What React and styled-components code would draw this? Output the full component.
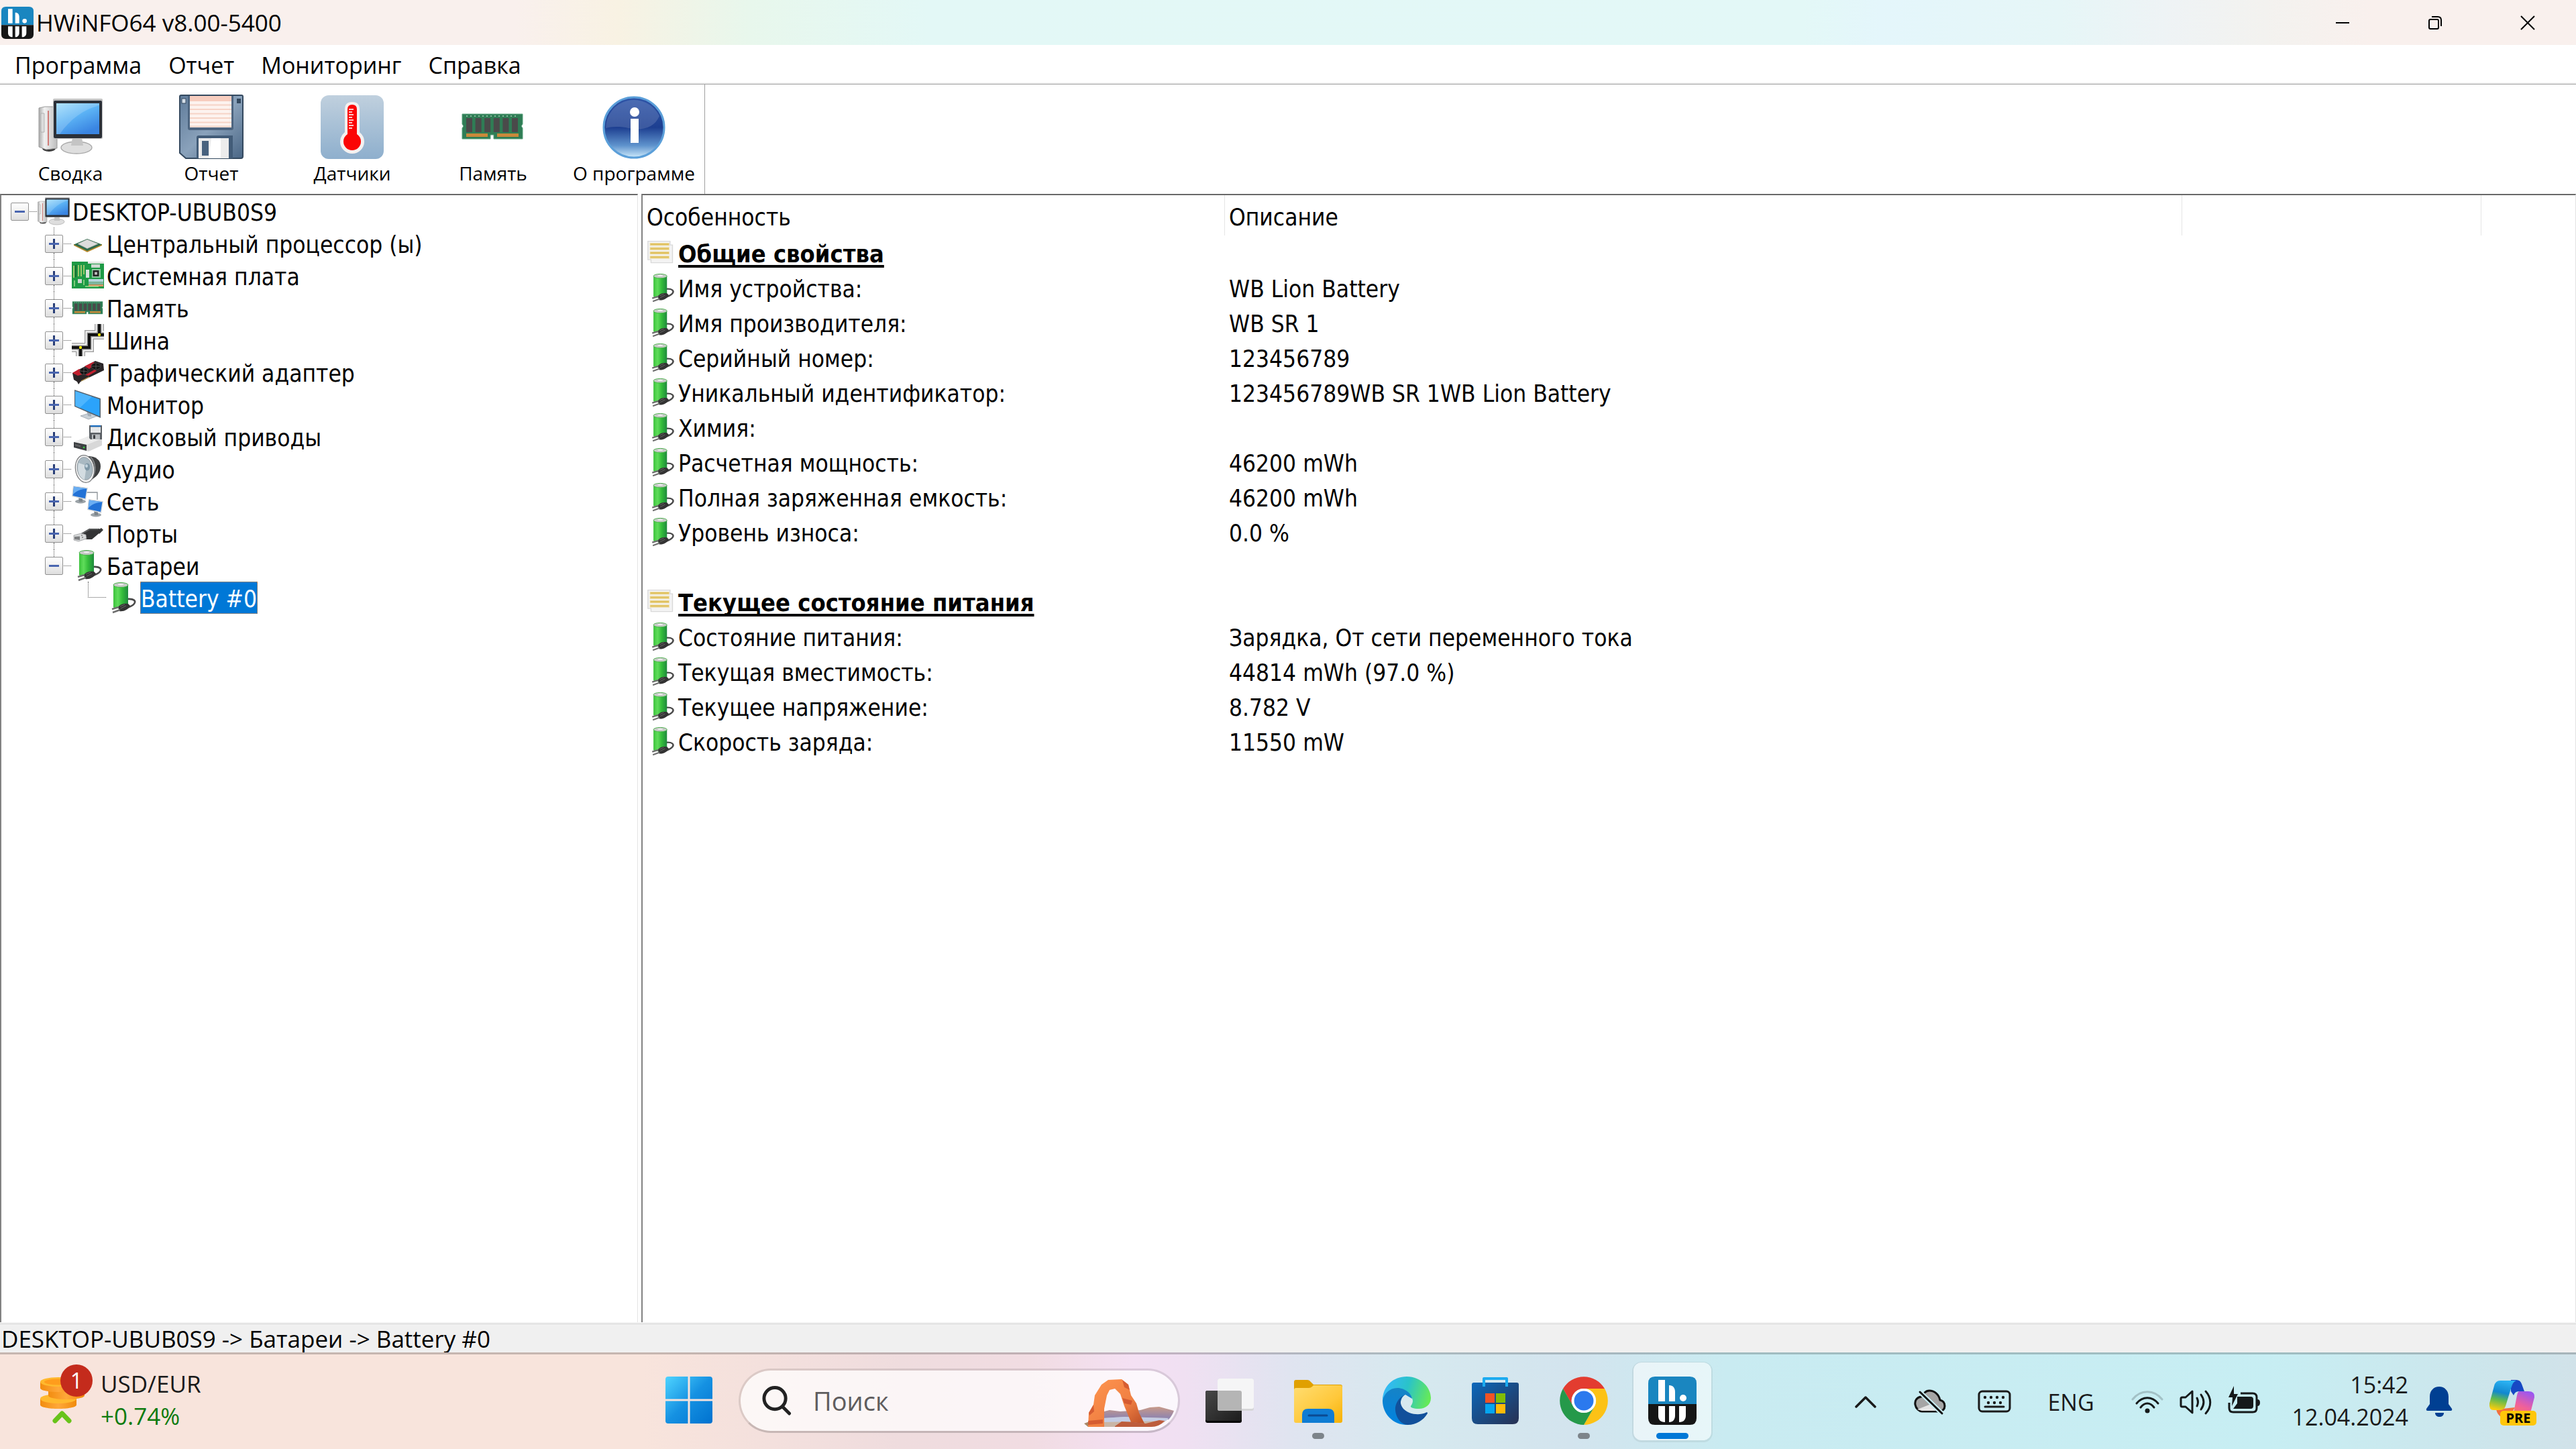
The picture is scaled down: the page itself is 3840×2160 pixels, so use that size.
import React, { useState } from 'react';
import styled, { createGlobalStyle, css } from 'styled-components';

const tahoma = '"DejaVu Sans Condensed", "DejaVu Sans", sans-serif';
const segoe = '"Open Sans", "Noto Sans", sans-serif';

const PcIcon = (props) => (
  <svg viewBox="0 0 48 48" {...props}>
    <defs>
      <linearGradient id="pcScreen" x1="0" y1="0" x2="0.6" y2="1">
        <stop offset="0" stopColor="#9fdcfa" />
        <stop offset="0.5" stopColor="#5cb3f5" />
        <stop offset="1" stopColor="#3a85e2" />
      </linearGradient>
      <linearGradient id="pcTower" x1="0" y1="0" x2="1" y2="0">
        <stop offset="0" stopColor="#a9a9a9" />
        <stop offset="0.3" stopColor="#f2f2f2" />
        <stop offset="1" stopColor="#bdbdbd" />
      </linearGradient>
    </defs>
    <ellipse cx="8" cy="40" rx="5" ry="2.5" fill="#3c3c3c" />
    <path d="M0.5 10 L5 9 L14 9 L14 40 L6 41 L0.5 39Z" fill="url(#pcTower)" stroke="#9a9a9a" strokeWidth="0.5" />
    <path d="M7.500 12V38" stroke="#c9504a" strokeWidth="0.7" />
    <path d="M2 14h2.500v14H2z" fill="#dcdcdc" stroke="#a8a8a8" strokeWidth="0.4" />
    <ellipse cx="28.500" cy="39.500" rx="11.500" ry="4.500" fill="#dedede" stroke="#aaa" strokeWidth="0.7" />
    <path d="M25.500 32h7l1 6h-9z" fill="#c4c4c4" />
    <rect x="11" y="3" width="37" height="30" rx="1" fill="#c2c2c2" />
    <rect x="11.500" y="4.500" width="36" height="28" rx="1" fill="#2b3038" />
    <rect x="13.500" y="6.500" width="32" height="23" fill="url(#pcScreen)" />
    <path d="M13.500 29.500V6.500H45.500V8C34 11 24 18 16 29.500Z" fill="#fff" opacity="0.18" />
  </svg>
);

const CpuIcon = () => (
  <svg viewBox="0 0 48 48">
    <path d="M3 27L23 37L45 27L45 25L3 25Z" fill="#b98a2e" />
    <path d="M3 25.500L23 35L45 25.500L23 17Z" fill="#2f6b4c" />
    <path d="M9 24.500L23 31.500L39 24.500L23 18Z" fill="#dcdcdc" stroke="#b5b5b5" strokeWidth="0.6" />
  </svg>
);

const BoardIcon = () => (
  <svg viewBox="0 0 48 48">
    <rect y="3" width="48" height="40" fill="#1d9a45" />
    <path d="M24 3h24v3H24z" fill="#dfe6df" />
    <path d="M3 9v18M10 8v17M14 8v17M18 8v14" stroke="#c8d67a" strokeWidth="1.500" />
    <path d="M6 8v18" stroke="#1b5c31" strokeWidth="1.500" />
    <rect x="21" y="15" width="5" height="12" fill="#d8e2dc" />
    <rect x="29" y="7" width="13" height="5" fill="#cfd8d2" />
    <rect x="30" y="14" width="13" height="13" fill="#8fc7a0" />
    <rect x="31.500" y="16" width="9" height="9" fill="#222" />
    <rect x="34" y="18.500" width="4" height="4" fill="#bbb" />
    <rect x="25" y="29" width="22" height="4" fill="#b5d5dd" />
    <rect x="25" y="33.500" width="22" height="3" fill="#8fb9ad" />
    <rect x="25" y="37" width="22" height="3" fill="#d69568" />
    <rect x="9" y="29" width="6" height="6" fill="#cdd5cf" />
    <path d="M4 31v9M18 30v8M20 40h20" stroke="#9fdc8c" strokeWidth="1.500" />
  </svg>
);

const RamIcon = (props) => (
  <svg viewBox="0 0 48 48" {...props}>
    <path d="M1 14.500H46V22l-1 1.500l1 1.500V33H24.500V30h-2.500V33H1V25l1-1.500L1 22Z" fill="#2f7d55" stroke="#58a27c" strokeWidth="0.5" />
    <path d="M4 16h39" stroke="#a5cdb5" strokeWidth="0.8" strokeDasharray="1 2" />
    <g fill="#4a4a4a">
      <rect x="4" y="17.500" width="4.500" height="10.500" />
      <rect x="10.800" y="17.500" width="4.500" height="10.500" />
      <rect x="17.600" y="17.500" width="4.500" height="10.500" />
      <rect x="24.400" y="17.500" width="4.500" height="10.500" />
      <rect x="31.200" y="17.500" width="4.500" height="10.500" />
      <rect x="38" y="17.500" width="4.500" height="10.500" />
    </g>
    <path d="M4 29h16v2.500H4zM27 29h16v2.500H27z" fill="#c9893a" />
  </svg>
);

const BusIcon = () => (
  <svg viewBox="0 0 48 48" fill="none">
    <g stroke="#a2a2a2" strokeWidth="14">
      <path d="M0 35H26V16H48M13 35V48M41 16V0" />
    </g>
    <g stroke="#fafafa" strokeWidth="11">
      <path d="M0 35H26V16H48M13 35V48M41 16V0" />
    </g>
    <g stroke="#8a8a8a" strokeWidth="7">
      <path d="M0 35H26V16H48M13 35V48M41 16V0" />
    </g>
    <g stroke="#111" strokeWidth="4">
      <path d="M0 35H26V16H48M13 35V48M41 16V0" />
    </g>
    <circle cx="13" cy="35" r="2.200" fill="#f2e600" />
    <circle cx="41" cy="16" r="2.200" fill="#f2e600" />
  </svg>
);

const GpuIcon = () => (
  <svg viewBox="0 0 48 48">
    <path d="M1 25L35 7L47 11L48 21L13 38L10 42L8 38L3 35Z" fill="#2a2527" />
    <path d="M1 25L11 19L20 26L9 29Z" fill="#c11f2e" />
    <path d="M19 15L32 8.500L36 11L26 19ZM20 28L34 20L37 22L25 29Z" fill="#c11f2e" />
    <ellipse cx="18" cy="22.500" rx="6" ry="5" fill="#111" stroke="#555" strokeWidth="0.7" />
    <ellipse cx="36" cy="15" rx="7" ry="5" fill="#151515" stroke="#555" strokeWidth="0.7" />
    <path d="M13 22l10 1M18 18v9M30 15l12 0M36 11v8" stroke="#6b6b6b" strokeWidth="0.7" />
    <path d="M14 37l12-6" stroke="#b89a50" strokeWidth="1.300" />
  </svg>
);

const MonitorIcon = () => (
  <svg viewBox="0 0 48 48">
    <path d="M13 41L29 36L38 41L25 46Z" fill="#c9d1d8" stroke="#8d98a3" strokeWidth="0.7" />
    <path d="M22 33L29 36V42L24 41Z" fill="#a4afb9" />
    <path d="M4 2L43 15V44L4 27Z" fill="#55616c" />
    <path d="M5.200 4L41.500 16.200V41.500L5.200 26Z" fill="#2ba3fb" />
    <path d="M5.200 4L30 12.300L12 29L5.200 26Z" fill="#5cbcff" opacity="0.7" />
  </svg>
);

const DiskIcon = () => (
  <svg viewBox="0 0 48 48">
    <path d="M3 32L26 23L45 27V37L25 46L3 40Z" fill="#d8d8d8" />
    <path d="M3 32L26 23L45 27L22 36Z" fill="#ececec" />
    <path d="M3 32L22 36V45L3 40Z" fill="#3c3f42" />
    <path d="M5 35.500L13 37.500M5 37L13 39" stroke="#777" strokeWidth="0.8" />
    <circle cx="18" cy="40" r="1.300" fill="#35d83b" />
    <path d="M26 7H45V28H28L26 26Z" fill="#5b6065" />
    <path d="M28 7H43V9.500H28Z" fill="#1e6fc0" />
    <path d="M28 9.500H43V18H28Z" fill="#e6e8e9" />
    <path d="M30 20.500H42V28H30Z" fill="#b9bdc0" />
    <path d="M32 21.500H35V27H32Z" fill="#3c3f42" />
  </svg>
);

const AudioIcon = () => (
  <svg viewBox="0 0 48 48">
    <path d="M24 5C36 5 43 11 43 20C43 30 36 37 26 42Z" fill="#3d3f40" />
    <path d="M28 6C36 14 37 28 30 38" fill="none" stroke="#8a8d8f" strokeWidth="1.500" />
    <ellipse cx="19.500" cy="24" rx="14" ry="20.500" fill="#f4f4f4" stroke="#77797b" strokeWidth="1.200" transform="rotate(-8 19 24)" />
    <ellipse cx="19.500" cy="23.500" rx="11.500" ry="17" fill="#a9b9c2" stroke="#8a9297" strokeWidth="0.8" transform="rotate(-8 19 23)" />
    <path d="M10 15L22 19L19 40C12 38 7 28 10 15Z" fill="#d3dce1" />
    <ellipse cx="23" cy="21" rx="4" ry="5.500" fill="#7e97a6" />
    <ellipse cx="22" cy="19.500" rx="2" ry="2.500" fill="#c4d5df" />
  </svg>
);

const NetScreen = ({ x, y }) => (
  <g transform={`translate(${x} ${y})`}>
    <ellipse cx="13" cy="23.500" rx="8" ry="3" fill="#9ca3a8" />
    <path d="M10 17L16 18V24H11Z" fill="#7d858b" />
    <path d="M2 0L24 3L21 21L0 16Z" fill="#d6dadd" />
    <path d="M3 1.500L22.500 4.200L20 19L1.500 15Z" fill="#2272d6" />
    <path d="M3 1.500L22.500 4.200C14 5 6 8 2 13Z" fill="#6aaef2" />
  </g>
);

const NetIcon = () => (
  <svg viewBox="0 0 48 48">
    <path d="M22 11H38V22" fill="none" stroke="#8b9196" strokeWidth="1.300" />
    <NetScreen x={0} y={1} />
    <NetScreen x={23} y={21} />
  </svg>
);

const UsbIcon = () => (
  <svg viewBox="0 0 48 48">
    <path d="M38 20L44 16L47 19L41 25Z" fill="#3a3a3a" />
    <path d="M14 24L26 17L41 17L43 22L30 33L18 33Z" fill="#333435" />
    <path d="M16 24L27 18L40 18" stroke="#707273" strokeWidth="1.200" fill="none" />
    <path d="M3 27L14 24L21 26L22 32L10 36L3 34Z" fill="#d7d9da" stroke="#8f9193" strokeWidth="0.7" />
    <path d="M4 29L12 28.500V34L4 33Z" fill="#7b7d7f" />
    <path d="M14 27h2M15 30h2" stroke="#555" strokeWidth="1.200" />
  </svg>
);

const BatteryIcon = () => (
  <svg viewBox="0 0 48 48">
    <defs>
      <linearGradient id="cell" x1="0" y1="0" x2="1" y2="0">
        <stop offset="0" stopColor="#3cc23c" />
        <stop offset="0.3" stopColor="#5fdd5a" />
        <stop offset="0.6" stopColor="#35bd3b" />
        <stop offset="1" stopColor="#1e8a3c" />
      </linearGradient>
    </defs>
    <path d="M31 26C42 25 45 29 42 33C39 37 34 38 29 40" fill="none" stroke="#4a4a4a" strokeWidth="2.600" />
    <path d="M11 5H33V38C33 41 11 41 11 38Z" fill="url(#cell)" />
    <ellipse cx="22" cy="5" rx="11" ry="3.500" fill="#c9ccc9" stroke="#47b148" strokeWidth="1" />
    <ellipse cx="22" cy="4.300" rx="5" ry="1.800" fill="#efefef" stroke="#999" strokeWidth="0.5" />
    <path d="M18 38C21 33 28 32 33 33L36 36C33 42 26 45 20 44Z" fill="#333" />
    <path d="M21 37L28 34M22 40L30 36" stroke="#777" strokeWidth="0.8" />
    <path d="M9 41L19 38M10 46L21 42" stroke="#6e6e6e" strokeWidth="2.400" />
  </svg>
);

const SectionIcon = () => (
  <svg viewBox="0 0 48 48">
    <path d="M2 5H38V11H42V40H7V35H2Z" fill="#f3f3f3" stroke="#d9d9d9" strokeWidth="1.500" />
    <path d="M5 10H37M5 17H37M5 24H37M5 31H37" stroke="#efdfa8" strokeWidth="5" />
    <path d="M6 10H36M6 17H36M6 24H36M6 31H36" stroke="#dfc05c" strokeWidth="2.500" />
  </svg>
);

const FloppyIcon = () => (
  <svg viewBox="0 0 96 96">
    <defs>
      <linearGradient id="floppy" x1="0" y1="0" x2="1" y2="1">
        <stop offset="0" stopColor="#5f7b9a" />
        <stop offset="0.5" stopColor="#8aa2bb" />
        <stop offset="1" stopColor="#4a6685" />
      </linearGradient>
    </defs>
    <path d="M1 3Q1 1 3 1H93Q95 1 95 3V92Q95 95 92 95H10L1 87Z" fill="url(#floppy)" stroke="#34495f" strokeWidth="2" />
    <rect x="4" y="6" width="6" height="7" fill="#d5dfe9" stroke="#34495f" />
    <rect x="86" y="6" width="6" height="7" fill="#34495f" />
    <path d="M13 2H81V50Q81 53 78 53H16Q13 53 13 50Z" fill="#4d6580" />
    <path d="M16 2H78V49H16Z" fill="#fdf3ef" />
    <path d="M16 2H78V10H16Z" fill="#f7cdbf" />
    <path d="M16 15.500H78M16 22H78M16 28.500H78M16 35H78M16 41.500H78M16 47.500H78" stroke="#f6d3c6" strokeWidth="2" />
    <path d="M26 95V64Q26 61 29 61H80V95Z" fill="#425c78" />
    <rect x="29" y="65" width="45" height="30" fill="#ececec" />
    <path d="M48 65h14v30H44z" fill="#fff" />
    <rect x="34" y="69" width="10" height="22" fill="#48627e" />
  </svg>
);

const ThermoIcon = () => (
  <svg viewBox="0 0 96 96">
    <defs>
      <linearGradient id="thermo" x1="0" y1="0" x2="0" y2="1">
        <stop offset="0" stopColor="#c0d0de" />
        <stop offset="1" stopColor="#8eafcd" />
      </linearGradient>
    </defs>
    <rect x="1" y="1" width="94" height="95" rx="12" fill="url(#thermo)" />
    <path d="M37 22Q37 11 48 11Q59 11 59 22V56Q66 62 66 70A18 18 0 0 1 30 70Q30 62 37 56Z" fill="#f4f1f0" />
    <path d="M41 22Q41 15 48 15Q55 15 55 22V59Q61 63 61 70A13 13 0 0 1 35 70Q35 63 41 59Z" fill="#fb0505" />
    <path d="M43 22h7M43 26h5M43 30h7M43 34h5M43 38h7M43 42h5M43 46h7M43 50h5" stroke="#ffc4c4" strokeWidth="2" />
  </svg>
);

const InfoIcon = () => (
  <svg viewBox="0 0 96 96">
    <defs>
      <linearGradient id="info" x1="0" y1="0" x2="0" y2="1">
        <stop offset="0" stopColor="#2f55a8" />
        <stop offset="0.5" stopColor="#1d3f91" />
        <stop offset="0.8" stopColor="#5f93cd" />
        <stop offset="1" stopColor="#cdeafb" />
      </linearGradient>
    </defs>
    <circle cx="48" cy="49" r="45" fill="url(#info)" stroke="#5b9fd9" strokeWidth="3" />
    <path d="M6 50A42 42 0 0 1 86 32C78 50 60 54 40 50C26 47 14 48 6 50Z" fill="#fff" opacity="0.14" />
    <circle cx="49" cy="26" r="7" fill="#fff" />
    <path d="M43 36h12v36H43z" fill="#fff" />
  </svg>
);

const AppLogo = () => (
  <svg viewBox="0 0 72 72">
    <path d="M0 41V10Q0 0 10 0H62Q72 0 72 10V41Z" fill="#1a86c0" />
    <path d="M0 41H72V62Q72 72 62 72H10Q0 72 0 62Z" fill="#161616" />
    <g fill="#fff">
      <path d="M15 5H25V37H15ZM31 13C37 13 40 17 40 23V37H31Z" />
      <circle cx="52" cy="32" r="5" />
      <path d="M15 44H25V68C18 68 15 64 15 59ZM31 44H40V58C40 64 37 68 31 68ZM46 44H56V58C56 64 53 68 46 68Z" />
    </g>
  </svg>
);

const CoinsIcon = () => (
  <svg viewBox="0 0 72 72">
    <defs>
      <linearGradient id="coin" x1="0" y1="0" x2="1" y2="0">
        <stop offset="0" stopColor="#f28c0f" />
        <stop offset="0.5" stopColor="#ffa83a" />
        <stop offset="1" stopColor="#f08a0a" />
      </linearGradient>
    </defs>
    <path d="M0 32V41C0 49 54 49 54 41V32Z" fill="url(#coin)" />
    <ellipse cx="27" cy="32" rx="27" ry="7" fill="#ffb92e" />
    <path d="M12 20V27C12 35 66 35 66 27V20Z" fill="url(#coin)" />
    <path d="M0 7V16C0 24 54 24 54 16V7Z" fill="url(#coin)" />
    <ellipse cx="27" cy="7" rx="27" ry="7" fill="#ffb92e" />
    <ellipse cx="27" cy="7" rx="21" ry="4.500" fill="#ff9d1c" />
    <path d="M22 65L32.500 54L43 65" fill="none" stroke="#68c31a" strokeWidth="7" strokeLinecap="round" strokeLinejoin="round" />
  </svg>
);

const StartIcon = () => (
  <svg viewBox="0 0 69 69">
    <defs>
      <linearGradient id="start" gradientUnits="userSpaceOnUse" x1="0" y1="0" x2="69" y2="69">
        <stop offset="0" stopColor="#4fd4ff" />
        <stop offset="0.5" stopColor="#1591e2" />
        <stop offset="1" stopColor="#0072cf" />
      </linearGradient>
    </defs>
    <path d="M4 0H33V33H0V4Q0 0 4 0ZM36 0H65Q69 0 69 4V33H36ZM0 36H33V69H4Q0 69 0 65ZM36 36H69V65Q69 69 65 69H36Z" fill="url(#start)" />
  </svg>
);

const SearchIcon = () => (
  <svg viewBox="0 0 44 45" fill="none" stroke="#222" strokeWidth="5" strokeLinecap="round">
    <circle cx="19" cy="19" r="16.500" />
    <path d="M31 32L41 42" />
  </svg>
);

const ArchIcon = () => (
  <svg viewBox="0 0 134 72">
    <defs>
      <linearGradient id="arch" x1="0" y1="0" x2="1" y2="1">
        <stop offset="0" stopColor="#ff9650" />
        <stop offset="0.6" stopColor="#f07f42" />
        <stop offset="1" stopColor="#b54a26" />
      </linearGradient>
      <linearGradient id="hills" x1="0" y1="0" x2="0" y2="1">
        <stop offset="0" stopColor="#c99a88" />
        <stop offset="1" stopColor="#8781b4" />
      </linearGradient>
    </defs>
    <path d="M26 49L38 46L54 48L84 46L98 42L112 41L134 47Q131 55 126 60H26Z" fill="url(#hills)" />
    <path d="M28 58L60 56L126 58Q114 71 98 71H26Z" fill="#c9b5a6" />
    <path d="M28 58L60 56L126 58L122 62L28 64Z" fill="#c4cce4" />
    <path d="M0 66L8 63L30 71H6Z" fill="#a78768" />
    <path d="M6 71L7 50L14 38L16 24L26 8L36 1L56 0L66 8L70 24L78 36L82 50L90 66L70 64L60 40L54 22L46 14L38 16L34 24L30 44L30 71Z" fill="url(#arch)" />
    <path d="M57 1L66 8L68 16L60 12ZM7 50L14 38L15 48L8 54ZM6 62L28 60V66L6 68ZM57 28L72 32L70 38L60 36Z" fill="#c94b2b" opacity="0.7" />
    <path d="M46 70L56 63L74 64L92 66L112 61L120 62Q112 71 100 71H46Z" fill="#bd5c3c" />
  </svg>
);

const TaskViewIcon = () => (
  <svg viewBox="0 0 72 72">
    <defs>
      <linearGradient id="tvDark" x1="0" y1="0" x2="1" y2="1">
        <stop offset="0" stopColor="#484848" />
        <stop offset="1" stopColor="#1c1c1c" />
      </linearGradient>
    </defs>
    <rect y="21" width="54" height="48" rx="3" fill="#000" />
    <rect y="21" width="54" height="45" rx="3" fill="url(#tvDark)" />
    <rect x="18" y="3" width="54" height="48" rx="3" fill="#d6d6d8" />
    <rect x="18" y="3" width="54" height="45" rx="3" fill="#f5f5f6" />
    <path d="M18 21H51Q54 21 54 24V51H21Q18 51 18 48Z" fill="#b5b5b5" />
  </svg>
);

const FolderIcon = () => (
  <svg viewBox="0 0 72 72">
    <defs>
      <linearGradient id="folder" x1="0" y1="0" x2="1" y2="1">
        <stop offset="0" stopColor="#ffdd72" />
        <stop offset="0.6" stopColor="#ffc83a" />
        <stop offset="1" stopColor="#f6b106" />
      </linearGradient>
    </defs>
    <path d="M0 8Q0 5 3 5H20Q23 5 25 8L29 12H69Q72 12 72 15V30H0Z" fill="#e0a000" />
    <path d="M0 20Q0 17 3 17H22Q25 17 27 15L29 13H69Q72 13 72 16V66Q72 69 69 69H3Q0 69 0 66Z" fill="url(#folder)" />
    <path d="M12 69V57Q12 48 21 48H51Q60 48 60 57V69Z" fill="#0f7cd3" />
    <path d="M22 58H49" stroke="#0b4a91" strokeWidth="3" strokeLinecap="round" />
  </svg>
);

const EdgeIcon = () => (
  <svg viewBox="0 0 72 72">
    <defs>
      <linearGradient id="edgeTop" x1="0" y1="0.3" x2="1" y2="0.5">
        <stop offset="0" stopColor="#35b8fb" />
        <stop offset="0.5" stopColor="#2ac3c9" />
        <stop offset="1" stopColor="#66ea58" />
      </linearGradient>
      <linearGradient id="edgeLeft" x1="0.5" y1="0" x2="0.3" y2="1">
        <stop offset="0" stopColor="#1683c6" />
        <stop offset="1" stopColor="#0082e0" />
      </linearGradient>
    </defs>
    <path d="M0 36C0 24 10 16 22 16C34 16 44 24 44 33L34 27C28 30 26 38 27 44C30 62 36 72 36 72C16 72 0 56 0 36Z" fill="url(#edgeLeft)" />
    <path d="M34 27C24 30 18 42 19 50C20 62 28 72 38 72C50 72 61 65 67 55C67 53 66 53 65 53.500C58 57 48 57 40 54C30 50 26 42 27 36C28 31 30 29 34 27Z" fill="#11509b" />
    <path d="M0 36C0 14 16 0 36 0C58 0 72 17 72 32C72 42 64 48 54 48C46 48 41 46 42 44C44 41 45 39 45 36C44 26 34 17 22 17C10 17 2 26 0 36Z" fill="url(#edgeTop)" />
  </svg>
);

const StoreIcon = () => (
  <svg viewBox="0 0 72 72">
    <defs>
      <linearGradient id="store" x1="0" y1="0" x2="1" y2="1">
        <stop offset="0" stopColor="#0c68bb" />
        <stop offset="1" stopColor="#283152" />
      </linearGradient>
    </defs>
    <path d="M1 12Q1 9 4 9H68Q71 9 71 12V62Q71 71 62 71H10Q1 71 1 62Z" fill="url(#store)" />
    <path d="M19 15V3H53V15" fill="none" stroke="#1cabf0" strokeWidth="4" strokeLinejoin="round" />
    <rect x="21" y="25" width="14" height="14" fill="#f35325" />
    <rect x="37" y="25" width="14" height="14" fill="#81bc06" />
    <rect x="21" y="41" width="14" height="14" fill="#05a6f0" />
    <rect x="37" y="41" width="14" height="14" fill="#ffba08" />
  </svg>
);

const ChromeIcon = () => (
  <svg viewBox="0 0 72 72">
    <path d="M5 18A36 36 0 0 1 67 18L36 18A18 18 0 0 0 20 45Z" fill="#e33c30" />
    <path d="M67 18A36 36 0 0 1 36 72L51.600 45A18 18 0 0 0 36 18Z" fill="#fcc216" />
    <path d="M36 72A36 36 0 0 1 5 18L20.400 45A18 18 0 0 0 51.600 45Z" fill="#25994a" />
    <circle cx="36" cy="36" r="18" fill="#fff" />
    <circle cx="36" cy="36" r="14.500" fill="#2b79ee" />
  </svg>
);

const ChevronIcon = () => (
  <svg viewBox="0 0 48 48" fill="none" stroke="#1a1a1a" strokeWidth="3.500" strokeLinecap="round" strokeLinejoin="round">
    <path d="M10 31L24 17L38 31" />
  </svg>
);

const CloudOffIcon = () => (
  <svg viewBox="0 0 48 48" fill="none" stroke="#111" strokeWidth="3" strokeLinecap="round">
    <path d="M11 16C4 17 1 22 2 28C3 34 8 38 12 38H38C43 38 46 34 46 30C46 25 43 22 39 21C37 12 30 7 23 7C20 7 18 8 16 10" fill="#a5a5a5" />
    <path d="M5 35L28 26L36 37H12Z" fill="#e4e4e4" stroke="none" />
    <path d="M12 12L42 41" stroke="#c9edf2" strokeWidth="7" />
    <path d="M9 9L42 41" />
  </svg>
);

const KeyboardIcon = () => (
  <svg viewBox="0 0 50 48" fill="none" stroke="#1a1a1a" strokeWidth="3" strokeLinecap="round">
    <rect x="2" y="8" width="46" height="30" rx="5" />
    <path d="M11 31H39" />
    <g fill="#1a1a1a" stroke="none">
      <circle cx="11" cy="17" r="2.200" />
      <circle cx="20" cy="17" r="2.200" />
      <circle cx="29" cy="17" r="2.200" />
      <circle cx="38" cy="17" r="2.200" />
      <circle cx="16" cy="25" r="2.200" />
      <circle cx="25" cy="25" r="2.200" />
      <circle cx="34" cy="25" r="2.200" />
    </g>
  </svg>
);

const WifiIcon = () => (
  <svg viewBox="0 0 48 48" fill="none" stroke="#15191a" strokeWidth="3" strokeLinecap="round">
    <path d="M2 20C14 5 34 5 46 20" stroke="#a3c1c6" />
    <path d="M8 26C17 15 31 15 40 26" />
    <path d="M14 32C20 24 28 24 34 32" />
    <circle cx="24" cy="37" r="3.500" fill="#15191a" stroke="none" />
  </svg>
);

const SpeakerIcon = () => (
  <svg viewBox="0 0 48 48" fill="none" stroke="#15191a" strokeWidth="3" strokeLinecap="round" strokeLinejoin="round">
    <path d="M2 19V29Q2 31 4 31H9L19 40V8L9 17H4Q2 17 2 19Z" />
    <path d="M26 18C28 22 28 26 26 30M32 13C37 20 37 28 32 35M39 8C48 18 48 31 39 41" />
  </svg>
);

const PowerIcon = () => (
  <svg viewBox="0 0 48 48">
    <path d="M19 11H37Q43 11 43 17V33Q43 39 37 39H8Q2 39 2 33V25" fill="none" stroke="#15191a" strokeWidth="3" />
    <path d="M14 16H34Q38 16 38 20V30Q38 34 34 34H8L14 26Z" fill="#15191a" />
    <path d="M44 20Q48 20 48 25Q48 30 44 30Z" fill="#15191a" />
    <path d="M9 0L1 17H7L6 30L15 12H9Z" fill="#15191a" />
  </svg>
);

const BellIcon = () => (
  <svg viewBox="0 0 48 48" fill="#003f92">
    <path d="M10 16C10 7 16 1 24 1C32 1 38 7 38 16V27L43 34Q44 37 41 37H7Q4 37 5 34L10 27Z" />
    <path d="M18 40H31C31 44 28 46 24.500 46C21 46 18 44 18 40Z" />
  </svg>
);

const CopilotIcon = () => (
  <svg viewBox="0 0 72 72">
    <defs>
      <linearGradient id="coLeft" x1="0.5" y1="0" x2="0.3" y2="1">
        <stop offset="0" stopColor="#2bb2f2" />
        <stop offset="0.4" stopColor="#1288cf" />
        <stop offset="0.65" stopColor="#5fb94f" />
        <stop offset="1" stopColor="#fccd0c" />
      </linearGradient>
      <linearGradient id="coRight" x1="0.7" y1="0" x2="0.3" y2="1">
        <stop offset="0" stopColor="#9b57f0" />
        <stop offset="0.5" stopColor="#f0609b" />
        <stop offset="1" stopColor="#ff8a3d" />
      </linearGradient>
    </defs>
    <path d="M34 3H42Q48 3 50 9L54 20H46Q40 20 38 26L34 20Z" fill="#1749c4" />
    <path d="M12 47L40 44L34 54Q31 58 26 58H20Q14 56 12 47Z" fill="#f3703f" />
    <path d="M18 4H42Q37 5 34 16L26 42Q24 48 17 48H8Q1 48 2 38L9 12Q11 4 18 4Z" fill="url(#coLeft)" />
    <path d="M46 20H60Q70 20 69 29L62 56Q60 63 53 63H30Q36 60 38 52L43 26Q44 21 46 20Z" fill="url(#coRight)" />
  </svg>
);

const tree = [
  { label: 'Центральный процессор (ы)', icon: <CpuIcon /> },
  { label: 'Системная плата', icon: <BoardIcon /> },
  { label: 'Память', icon: <RamIcon /> },
  { label: 'Шина', icon: <BusIcon /> },
  { label: 'Графический адаптер', icon: <GpuIcon /> },
  { label: 'Монитор', icon: <MonitorIcon /> },
  { label: 'Дисковый приводы', icon: <DiskIcon /> },
  { label: 'Аудио', icon: <AudioIcon /> },
  { label: 'Сеть', icon: <NetIcon /> },
  { label: 'Порты', icon: <UsbIcon /> },
  { label: 'Батареи', icon: <BatteryIcon />, children: ['Battery #0'] },
];

const details = [
  { section: 'Общие свойства' },
  { name: 'Имя устройства:', value: 'WB Lion Battery' },
  { name: 'Имя производителя:', value: 'WB SR 1' },
  { name: 'Серийный номер:', value: '123456789' },
  { name: 'Уникальный идентификатор:', value: '123456789WB SR 1WB Lion Battery' },
  { name: 'Химия:', value: '' },
  { name: 'Расчетная мощность:', value: '46200 mWh' },
  { name: 'Полная заряженная емкость:', value: '46200 mWh' },
  { name: 'Уровень износа:', value: '0.0 %' },
  {},
  { section: 'Текущее состояние питания' },
  { name: 'Состояние питания:', value: 'Зарядка, От сети переменного тока' },
  { name: 'Текущая вместимость:', value: '44814 mWh (97.0 %)' },
  { name: 'Текущее напряжение:', value: '8.782 V' },
  { name: 'Скорость заряда:', value: '11550 mW' },
];

const tools = [
  { label: 'Сводка', icon: <PcIcon /> },
  { label: 'Отчет', icon: <FloppyIcon /> },
  { label: 'Датчики', icon: <ThermoIcon /> },
  { label: 'Память', icon: <RamIcon /> },
  { label: 'О программе', icon: <InfoIcon /> },
];

const apps = [
  { name: 'Task view', icon: <TaskViewIcon /> },
  { name: 'Explorer', icon: <FolderIcon />, running: true },
  { name: 'Edge', icon: <EdgeIcon /> },
  { name: 'Store', icon: <StoreIcon /> },
  { name: 'Chrome', icon: <ChromeIcon />, running: true },
  { name: 'HWiNFO64', icon: <AppLogo />, active: true },
];

const App = () => {
  const [query, setQuery] = useState('');
  const [rootOpen, setRootOpen] = useState(true);
  const [batteriesOpen, setBatteriesOpen] = useState(true);

  return (
    <Desktop>
      <GlobalStyle />
      <TitleBar>
        <Icon $size={48}><AppLogo /></Icon>
        <Title>HWiNFO64 v8.00-5400</Title>
        <WindowButton aria-label="Minimize">
          <svg viewBox="0 0 20 20"><path d="M0 10H20" /></svg>
        </WindowButton>
        <WindowButton aria-label="Restore">
          <svg viewBox="0 0 20 20"><rect x="1" y="5" width="14" height="14" rx="2" /><path d="M5 1H14Q19 1 19 6V15" /></svg>
        </WindowButton>
        <WindowButton aria-label="Close">
          <svg viewBox="0 0 20 20"><path d="M0 0L20 20M20 0L0 20" /></svg>
        </WindowButton>
      </TitleBar>

      <MenuBar>
        {['Программа', 'Отчет', 'Мониторинг', 'Справка'].map((item) => (
          <MenuItem key={item}>{item}</MenuItem>
        ))}
      </MenuBar>

      <Toolbar>
        {tools.map((tool) => (
          <ToolButton key={tool.label}>
            <Icon $size={96}>{tool.icon}</Icon>
            {tool.label}
          </ToolButton>
        ))}
      </Toolbar>

      <Main>
        <TreePane>
          <TreeRow>
            <Branch>
              <Expander open={rootOpen} onClick={() => setRootOpen(!rootOpen)} />
            </Branch>
            <Stub />
            <Icon $size={48}><PcIcon /></Icon>
            <TreeLabel>DESKTOP-UBUB0S9</TreeLabel>
          </TreeRow>
          {rootOpen && (
            <TreeList>
              {tree.map((node) => (
                <li key={node.label}>
                  <TreeRow>
                    <Branch>
                      <Dots />
                      <Expander
                        open={Boolean(node.children) && batteriesOpen}
                        onClick={() => node.children && setBatteriesOpen(!batteriesOpen)}
                      />
                      <Dots $hidden={Boolean(node.children)} />
                    </Branch>
                    <Stub />
                    <Icon $size={48}>{node.icon}</Icon>
                    <TreeLabel>{node.label}</TreeLabel>
                  </TreeRow>
                  {node.children && batteriesOpen && (
                    <TreeList>
                      {node.children.map((child) => (
                        <li key={child}>
                          <TreeRow>
                            <Elbow />
                            <Icon $size={48}><BatteryIcon /></Icon>
                            <TreeLabel $selected>{child}</TreeLabel>
                          </TreeRow>
                        </li>
                      ))}
                    </TreeList>
                  )}
                </li>
              ))}
            </TreeList>
          )}
        </TreePane>

        <DetailsPane>
          <DetailsTable>
            <colgroup>
              <col className="name" />
              <col className="value" />
              <col className="extra" />
              <col />
            </colgroup>
            <thead>
              <tr>
                <HeadCell>Особенность</HeadCell>
                <HeadCell>Описание</HeadCell>
                <HeadCell />
                <HeadCell />
              </tr>
            </thead>
            <tbody>
              {details.map((row, i) => (
                <tr key={i}>
                  <Cell>
                    {row.section && (
                      <NameWrap>
                        <Icon $size={44}><SectionIcon /></Icon>
                        <Section>{row.section}</Section>
                      </NameWrap>
                    )}
                    {row.name && (
                      <NameWrap>
                        <Icon $size={44}><BatteryIcon /></Icon>
                        <CellText>{row.name}</CellText>
                      </NameWrap>
                    )}
                  </Cell>
                  <Cell>{row.value && <CellText>{row.value}</CellText>}</Cell>
                  <Cell />
                  <Cell />
                </tr>
              ))}
            </tbody>
          </DetailsTable>
        </DetailsPane>
      </Main>

      <StatusBar>DESKTOP-UBUB0S9 -&gt; Батареи -&gt; Battery #0</StatusBar>

      <Taskbar>
        <Widget>
          <CoinsWrap>
            <Icon $size={72}><CoinsIcon /></Icon>
            <Badge>1</Badge>
          </CoinsWrap>
          <WidgetText>
            <span>USD/EUR</span>
            <Gain>+0.74%</Gain>
          </WidgetText>
        </Widget>

        <TaskGroup>
          <TaskButton aria-label="Start">
            <Icon $size={70}><StartIcon /></Icon>
          </TaskButton>
          <SearchBox>
            <Icon $size={44}><SearchIcon /></Icon>
            <SearchInput
              type="text"
              aria-label="Поиск"
              placeholder="Поиск"
              value={query}
              onChange={(e) => setQuery(e.target.value)}
            />
            <ArchWrap><ArchIcon /></ArchWrap>
          </SearchBox>
          {apps.map((app) => (
            <TaskButton key={app.name} aria-label={app.name} $active={app.active}>
              <Icon $size={72}>{app.icon}</Icon>
              {(app.running || app.active) && <Indicator $active={app.active} />}
            </TaskButton>
          ))}
        </TaskGroup>

        <Tray>
          <TrayButton aria-label="Hidden icons"><Icon $size={48}><ChevronIcon /></Icon></TrayButton>
          <TrayButton aria-label="OneDrive"><Icon $size={48}><CloudOffIcon /></Icon></TrayButton>
          <TrayButton aria-label="Touch keyboard"><Icon $size={50}><KeyboardIcon /></Icon></TrayButton>
          <LanguageButton>ENG</LanguageButton>
          <QuickSettings aria-label="Quick settings">
            <Icon $size={48}><WifiIcon /></Icon>
            <Icon $size={48}><SpeakerIcon /></Icon>
            <Icon $size={48}><PowerIcon /></Icon>
          </QuickSettings>
          <ClockButton>
            <Clock>
              <span>15:42</span>
              <span>12.04.2024</span>
            </Clock>
            <Icon $size={48}><BellIcon /></Icon>
          </ClockButton>
          <CopilotButton aria-label="Copilot">
            <Icon $size={72}><CopilotIcon /></Icon>
            <Pre>PRE</Pre>
          </CopilotButton>
        </Tray>
      </Taskbar>
    </Desktop>
  );
};

const Expander = ({ open, onClick }) => (
  <ExpandButton aria-label={open ? 'Collapse' : 'Expand'} onClick={onClick}>
    <svg viewBox="0 0 25 25">
      {!open && <path d="M12.500 5V20" stroke="#2a3f78" strokeWidth="3" />}
      <path d="M5 12.500H20" stroke="#4a66b0" strokeWidth="3" />
    </svg>
  </ExpandButton>
);

const GlobalStyle = createGlobalStyle`
  * {
    box-sizing: border-box;
  }

  body {
    margin: 0;
    background: #fff;
    color: #000;
    font-family: ${segoe};
    font-size: 34px;
  }

  button {
    padding: 0;
    border: none;
    background: none;
    color: inherit;
    font: inherit;
  }

  svg {
    display: block;
  }
`;

const Desktop = styled.div`
  display: flex;
  flex-direction: column;
  min-height: 100vh;
`;

const Icon = styled.span`
  display: block;
  flex: none;
  width: ${(p) => p.$size}px;
  height: ${(p) => p.$size}px;

  svg {
    width: 100%;
    height: 100%;
  }
`;

const TitleBar = styled.header`
  display: flex;
  align-items: center;
  height: 67px;
  padding: 0 3px 0 2px;
  background: linear-gradient(
    90deg,
    #f9f0ed 0%,
    #f9f0ed 20%,
    #f8f2e3 24%,
    #e8f7ec 29%,
    #e3f8f6 36%,
    #e3f8f7 70%,
    #e4f6fb 73%,
    #e6f6f7 80%,
    #eef3f5 84%,
    #f3f2ef 88%,
    #f9f0ed 92%
  );
`;

const Title = styled.h1`
  flex: 1;
  margin: 0 0 0 4px;
  font-size: 35px;
  font-weight: 400;
  line-height: 48px;
`;

const WindowButton = styled.button`
  display: flex;
  align-items: center;
  justify-content: center;
  width: 138px;
  height: 64px;

  svg {
    width: 20px;
    height: 20px;
    overflow: visible;
    fill: none;
    stroke: #000;
    stroke-width: 2;
  }
`;

const MenuBar = styled.nav`
  display: flex;
  height: 59px;
  padding-left: 2px;
  border-bottom: 1px solid #a0a0a0;
  box-shadow: inset 0 -2px #f0f0f0;
`;

const MenuItem = styled.button`
  padding: 2px 20px 0;
  line-height: 54px;
`;

const Toolbar = styled.div`
  display: flex;
  align-self: flex-start;
  height: 163px;
  border-right: 1px solid #a0a0a0;
`;

const ToolButton = styled.button`
  display: flex;
  flex-direction: column;
  align-items: center;
  width: 210px;
  padding-top: 15px;
  font-size: 28px;
  line-height: 42px;
  white-space: nowrap;
`;

const Main = styled.main`
  display: flex;
  flex: 1;
  gap: 5px;
  font-family: ${tahoma};
  font-size: 35px;
  border-bottom: 2px solid #f0f0f0;
`;

const pane = css`
  border-top: 2px solid #696969;
  border-left: 2px solid #828282;
  border-right: 1px solid #e3e3e3;
`;

const TreePane = styled.section`
  ${pane}
  flex: none;
  width: 951px;
  padding-left: 14px;
`;

const TreeList = styled.ul`
  margin: 0;
  padding: 0 0 0 51px;
  list-style: none;
`;

const TreeRow = styled.div`
  display: flex;
  align-items: center;
  height: 48px;
`;

const Branch = styled.div`
  display: flex;
  flex-direction: column;
  align-items: center;
  justify-content: center;
  width: 27px;
  height: 48px;
`;

const Dots = styled.span`
  flex: 1;
  border-left: 1px dotted #555;
  visibility: ${(p) => (p.$hidden ? 'hidden' : 'visible')};
`;

const Stub = styled.span`
  width: 11px;
  margin: 0 1px;
  border-top: 1px dotted #555;
`;

const Elbow = styled.span`
  align-self: flex-start;
  width: 27px;
  height: 24px;
  margin-left: 13px;
  border-left: 1px dotted #555;
  border-bottom: 1px dotted #555;
`;

const ExpandButton = styled.button`
  flex: none;
  width: 27px;
  height: 27px;
  border: 1px solid #919191;
  border-radius: 2px;
  background: linear-gradient(#fff, #dedede);
`;

const TreeLabel = styled.span`
  margin-left: 3px;
  padding: 4px 0 0;
  border: 1px solid transparent;
  line-height: 42px;
  white-space: nowrap;

  ${(p) =>
    p.$selected &&
    css`
      border: 1px dotted #ff8728;
      background: #0078d7;
      color: #fff;
    `}
`;

const DetailsPane = styled.section`
  ${pane}
  flex: 1;
  min-width: 0;
`;

const DetailsTable = styled.table`
  width: 100%;
  table-layout: fixed;
  border-collapse: separate;
  border-spacing: 0;

  .name {
    width: 868px;
  }

  .value {
    width: 1427px;
  }

  .extra {
    width: 446px;
  }
`;

const HeadCell = styled.th`
  height: 60px;
  padding: 6px 6px 0;
  border-right: 1px solid #e5e5e5;
  font-weight: 400;
  text-align: left;

  &:last-child {
    border-right: none;
  }
`;

const Cell = styled.td`
  height: 52px;
  padding: 0 6px;
  white-space: nowrap;
`;

const NameWrap = styled.div`
  display: flex;
  align-items: center;
  gap: 3px;
`;

const CellText = styled.span`
  display: block;
  padding-top: 4px;
  line-height: 44px;
`;

const Section = styled(CellText)`
  font-size: 36px;
  font-weight: 700;
  text-decoration: underline;
  text-decoration-thickness: 4px;
  text-underline-offset: 4px;
  text-decoration-skip-ink: none;
`;

const StatusBar = styled.footer`
  height: 43px;
  padding-left: 2px;
  border-top: 1px solid #d7d7d7;
  background: #f0f0f0;
  font-size: 35px;
  line-height: 44px;
`;

const Taskbar = styled.footer`
  display: flex;
  height: 144px;
  border-top: 3px solid #0003;
  background: linear-gradient(
    90deg,
    #f8e4dc 0%,
    #f8e4dc 25%,
    #efdcde 35%,
    #f1dce2 40%,
    #f4e0f3 44%,
    #f0e0f2 46%,
    #e0e4f0 50%,
    #d6e9ef 55%,
    #d3e4ee 61%,
    #c9ebf1 67%,
    #c7eef3 88%,
    #cde5eb 97%,
    #d1e2e9 100%
  );
  background-origin: border-box;
`;

const Widget = styled.button`
  display: flex;
  align-items: flex-start;
  flex: none;
  gap: 18px;
  width: 969px;
  padding: 20px 0 0 60px;
  color: #1a1a1a;
  text-align: left;
`;

const CoinsWrap = styled.span`
  position: relative;
  padding-top: 14px;
`;

const Badge = styled.span`
  position: absolute;
  top: -5px;
  left: 30px;
  width: 48px;
  height: 48px;
  border-radius: 50%;
  background: #c42b1c;
  color: #fff;
  font-size: 32px;
  line-height: 48px;
  text-align: center;
`;

const WidgetText = styled.span`
  display: flex;
  flex-direction: column;
  font-size: 35px;
  line-height: 48px;
`;

const Gain = styled.span`
  color: #0f7b0f;
`;

const TaskGroup = styled.div`
  display: flex;
  align-items: flex-start;
  gap: 16px;
  padding-top: 12px;
`;

const TaskButton = styled.button`
  display: flex;
  flex-direction: column;
  align-items: center;
  gap: 12px;
  width: 116px;
  height: 116px;
  padding-top: 21px;
  border-radius: 12px;

  ${(p) =>
    p.$active &&
    css`
      background: #ffffff8c;
      box-shadow: 0 1px 0 2px #0000000f;
    `}
`;

const Indicator = styled.span`
  width: ${(p) => (p.$active ? 48 : 18)}px;
  height: 9px;
  border-radius: 5px;
  background: ${(p) => (p.$active ? '#0078d7' : '#7d848a')};
`;

const SearchBox = styled.label`
  display: flex;
  align-items: center;
  width: 658px;
  height: 96px;
  margin-top: 9px;
  padding: 0 6px 0 32px;
  border: 3px solid #0000001a;
  border-bottom-color: #0000002e;
  border-radius: 48px;
  background: #ffffffb8;
  background-clip: padding-box;
`;

const SearchInput = styled.input`
  flex: 1;
  min-width: 0;
  margin-left: 32px;
  padding: 0;
  border: none;
  outline: none;
  background: none;
  font-family: ${segoe};
  font-size: 38px;

  &::placeholder {
    color: #5f5d5e;
    opacity: 1;
  }
`;

const ArchWrap = styled.span`
  width: 134px;
  height: 72px;
  margin-top: 8px;
`;

const Tray = styled.div`
  display: flex;
  align-items: stretch;
  margin-left: auto;
  padding-right: 59px;
  color: #1a1a1a;
`;

const TrayButton = styled.button`
  display: flex;
  align-items: center;
  justify-content: center;
  width: 96px;
`;

const LanguageButton = styled(TrayButton)`
  width: 132px;
`;

const QuickSettings = styled(TrayButton)`
  gap: 24px;
  width: 240px;
`;

const ClockButton = styled(TrayButton)`
  justify-content: flex-end;
  gap: 22px;
  width: 291px;
  padding-right: 24px;
`;

const Clock = styled.span`
  display: flex;
  flex-direction: column;
  padding-bottom: 4px;
  line-height: 48px;
  text-align: right;
`;

const CopilotButton = styled(TrayButton)`
  position: relative;
  justify-content: flex-end;
  width: 97px;
`;

const Pre = styled.span`
  position: absolute;
  right: 0;
  bottom: 35px;
  width: 54px;
  border-radius: 5px;
  background: #ffc60a;
  color: #000;
  font-size: 20px;
  font-weight: 700;
  line-height: 22px;
  text-align: center;
`;

export default App;
